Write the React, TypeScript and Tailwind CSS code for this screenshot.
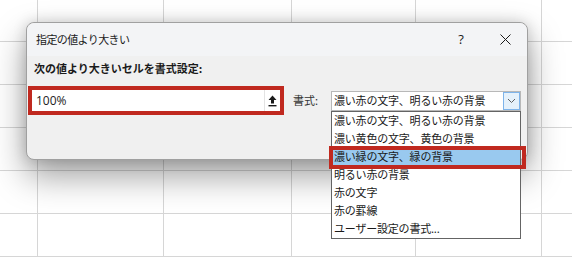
import React from "react";

const items = [
  "濃い赤の文字、明るい赤の背景",
  "濃い黄色の文字、黄色の背景",
  "濃い緑の文字、緑の背景",
  "明るい赤の背景",
  "赤の文字",
  "赤の罫線",
  "ユーザー設定の書式...",
];

function GridBg() {
  const rows = Array.from({ length: 7 });
  const cols = Array.from({ length: 6 });
  return (
    <div className="grid grid-cols-[38px_126px_128px_124px_126px_30px] grid-rows-[42px_43px_43px_43px_43px_43px_43px] w-[572px] h-[257px] overflow-hidden bg-white">
      {rows.map((_, r) =>
        cols.map((_, c) => (
          <div
            key={`${r}-${c}`}
            className={`border-[#d6d6d6] ${c < 5 ? "border-r" : ""} border-b`}
          />
        ))
      )}
    </div>
  );
}

function UploadIcon() {
  return (
    <svg width="9" height="12" viewBox="0 0 9 12" fill="#1a1a1a">
      <path d="M4.5 0.5 L8.5 5 H6 V8.5 H3 V5 H0.5 Z" />
      <rect x="0.5" y="10" width="8" height="1.4" />
    </svg>
  );
}

function Chevron() {
  return (
    <svg width="9" height="6" viewBox="0 0 9 6" fill="none" stroke="#606060" strokeWidth="1">
      <path d="M1 1 L4.5 4.5 L8 1" />
    </svg>
  );
}

export default function App() {
  return (
    <div className="relative w-[572px] h-[257px] overflow-hidden font-['Noto_Sans','Noto_Sans_CJK_JP',sans-serif] text-[#1a1a1a]">
      <GridBg />
      {/* Dialog window */}
      <div className="absolute left-[26px] top-[22px] w-[502px] h-[138px] rounded-[8px] border border-[#a0a0a0] bg-[#f0f0f0] shadow-[0_16px_34px_rgba(0,0,0,0.38),0_0_14px_rgba(0,0,0,0.16)] flex flex-col">
        <div className="h-[33px] flex items-center rounded-t-[8px] bg-[#f3f4f6]">
          <div className="pl-[9px] text-[11px] leading-none tracking-[-0.6px] font-['Noto_Sans_CJK_JP',sans-serif] flex-1">
            指定の値より大きい
          </div>
          <div className="text-[13px] leading-none w-[20px] text-center mr-[28px] font-['Open_Sans',sans-serif]">?</div>
          <div className="mr-[16px] w-[12px] h-[12px] flex items-center justify-center">
            <svg width="11" height="11" viewBox="0 0 11 11" stroke="#1a1a1a" strokeWidth="1">
              <path d="M0.5 0.5 L10.5 10.5 M10.5 0.5 L0.5 10.5" />
            </svg>
          </div>
        </div>
        <div className="pl-[7px] pt-[7px] text-[11px] leading-none font-bold font-['Noto_Sans_CJK_JP',sans-serif]">
          次の値より大きいセルを書式設定:
        </div>
        <div className="flex items-center mt-[12px]">
          <div className="ml-[1px] w-[256px] h-[29px] border-[4px] border-[#c0291f] bg-white flex items-center">
            <div className="flex-1 pl-[4px] text-[12px] leading-none font-['Open_Sans',sans-serif] text-[#222]">100%</div>
            <div className="h-full w-[16px] border-l border-[#e3e3e3] flex items-center justify-center">
              <UploadIcon />
            </div>
          </div>
          <div className="ml-[9px] text-[11px] leading-none font-['Noto_Sans_CJK_JP',sans-serif] text-[#333] w-[38px]">書式:</div>
          <div className="relative">
            <div className="w-[190px] h-[20px] border border-[#b8b8b8] bg-white flex items-center">
              <div className="flex-1 pl-[2px] text-[11px] leading-none tracking-[-0.2px] font-['Noto_Sans_CJK_JP',sans-serif]">
                濃い赤の文字、明るい赤の背景
              </div>
              <div className="w-[17px] h-[18px] border border-[#7eb4ea] bg-[#e5f1fb] flex items-center justify-center">
                <Chevron />
              </div>
            </div>
            {/* Dropdown list */}
            <div className="absolute left-0 top-[20px] w-[190px] border border-[#646464] bg-white z-10">
              {items.map((t, i) => (
                <div
                  key={t}
                  className={`h-[18px] flex items-center pl-[2px] text-[11px] leading-none tracking-[-0.2px] font-['Noto_Sans_CJK_JP',sans-serif] ${i === 2 ? "bg-[#99c9ef]" : ""}`}
                >
                  {t}
                </div>
              ))}
              <div className="absolute left-[-3px] top-[34px] w-[197px] h-[23px] border-[4px] border-[#c0291f]" />
            </div>
          </div>
        </div>
      </div>
    </div>
  );
}
